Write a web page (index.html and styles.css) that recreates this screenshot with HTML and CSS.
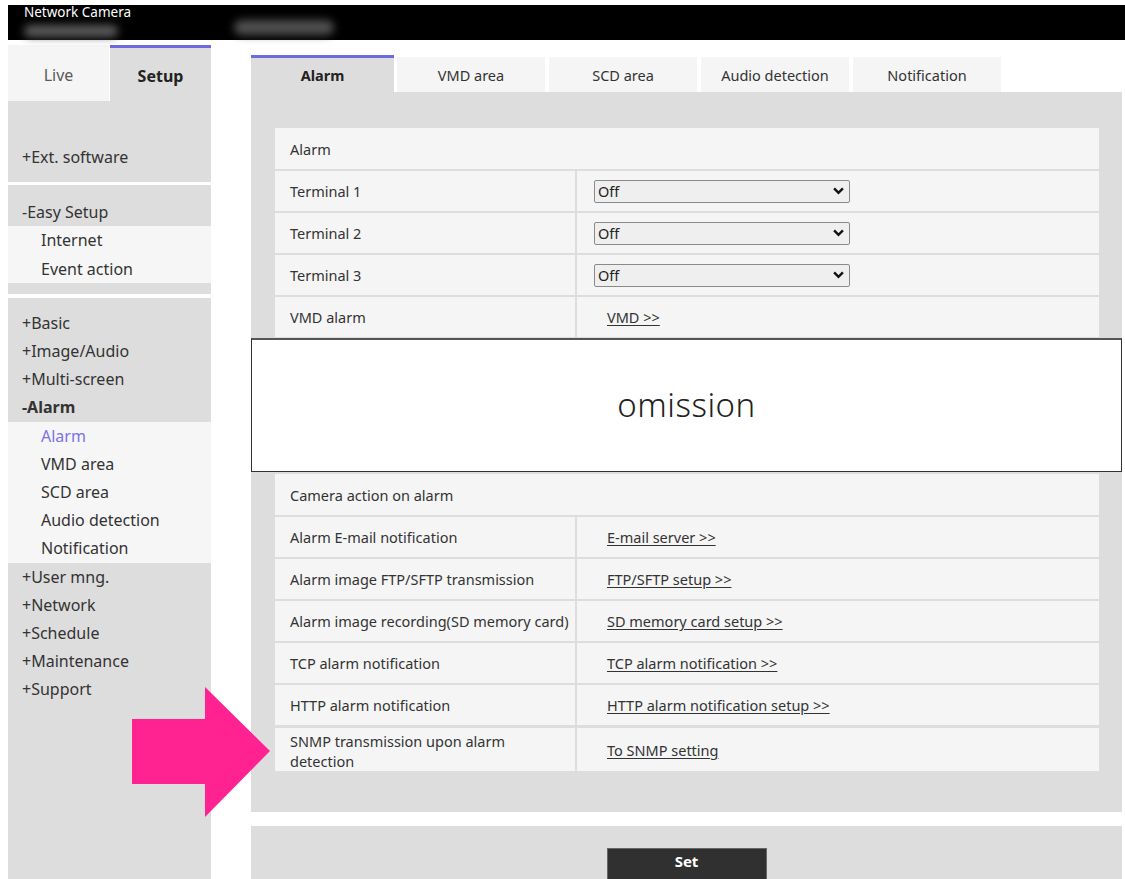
FILE: index.html
```html
<!DOCTYPE html>
<html lang="en">
<head>
<meta charset="utf-8">
<title>Network Camera - Setup - Alarm</title>
<link rel="stylesheet" href="styles.css">
</head>
<body>
<div class="page">
  <header class="topbar">
    <span class="brand-name">Network Camera</span>
    <span class="smudge smudge-model"></span>
    <span class="smudge smudge-title"></span>
  </header>

  <div class="layout">
    <aside class="sidebar">
      <div class="mode-tabs">
        <div class="mode-tab">Live</div>
        <div class="mode-tab active">Setup</div>
      </div>

      <div class="menu-group group-ext">
        <div class="menu-item">+Ext. software</div>
      </div>

      <div class="menu-group group-easy">
        <div class="menu-item">-Easy Setup</div>
        <div class="submenu">
          <div class="menu-item sub">Internet</div>
          <div class="menu-item sub">Event action</div>
        </div>
      </div>

      <div class="menu-group group-main">
        <div class="menu-item">+Basic</div>
        <div class="menu-item">+Image/Audio</div>
        <div class="menu-item">+Multi-screen</div>
        <div class="menu-item open">-Alarm</div>
        <div class="submenu">
          <div class="menu-item sub current">Alarm</div>
          <div class="menu-item sub">VMD area</div>
          <div class="menu-item sub">SCD area</div>
          <div class="menu-item sub">Audio detection</div>
          <div class="menu-item sub">Notification</div>
        </div>
        <div class="menu-item">+User mng.</div>
        <div class="menu-item">+Network</div>
        <div class="menu-item">+Schedule</div>
        <div class="menu-item">+Maintenance</div>
        <div class="menu-item">+Support</div>
      </div>
    </aside>

    <main class="main">
      <nav class="tabs">
        <div class="tab active">Alarm</div>
        <div class="tab">VMD area</div>
        <div class="tab">SCD area</div>
        <div class="tab">Audio detection</div>
        <div class="tab">Notification</div>
      </nav>

      <section class="panel">
        <div class="settings">
          <div class="row heading">Alarm</div>
          <div class="row">
            <div class="label">Terminal 1</div>
            <div class="value">
              <div class="select"><span>Off</span>
                <svg class="chevron" viewBox="0 0 10 7" width="11" height="8"><path d="M1 1.2 L5 5.2 L9 1.2" fill="none" stroke="#111" stroke-width="2.2"/></svg>
              </div>
            </div>
          </div>
          <div class="row">
            <div class="label">Terminal 2</div>
            <div class="value">
              <div class="select"><span>Off</span>
                <svg class="chevron" viewBox="0 0 10 7" width="11" height="8"><path d="M1 1.2 L5 5.2 L9 1.2" fill="none" stroke="#111" stroke-width="2.2"/></svg>
              </div>
            </div>
          </div>
          <div class="row">
            <div class="label">Terminal 3</div>
            <div class="value">
              <div class="select"><span>Off</span>
                <svg class="chevron" viewBox="0 0 10 7" width="11" height="8"><path d="M1 1.2 L5 5.2 L9 1.2" fill="none" stroke="#111" stroke-width="2.2"/></svg>
              </div>
            </div>
          </div>
          <div class="row">
            <div class="label">VMD alarm</div>
            <div class="value"><a class="link" href="#">VMD &gt;&gt;</a></div>
          </div>
        </div>

        <div class="omission">omission</div>

        <div class="settings">
          <div class="row heading">Camera action on alarm</div>
          <div class="row">
            <div class="label">Alarm E-mail notification</div>
            <div class="value"><a class="link" href="#">E-mail server &gt;&gt;</a></div>
          </div>
          <div class="row">
            <div class="label">Alarm image FTP/SFTP transmission</div>
            <div class="value"><a class="link" href="#">FTP/SFTP setup &gt;&gt;</a></div>
          </div>
          <div class="row">
            <div class="label">Alarm image recording(SD memory card)</div>
            <div class="value"><a class="link" href="#">SD memory card setup &gt;&gt;</a></div>
          </div>
          <div class="row">
            <div class="label">TCP alarm notification</div>
            <div class="value"><a class="link" href="#">TCP alarm notification &gt;&gt;</a></div>
          </div>
          <div class="row">
            <div class="label">HTTP alarm notification</div>
            <div class="value"><a class="link" href="#">HTTP alarm notification setup &gt;&gt;</a></div>
          </div>
          <div class="row tall">
            <div class="label two-line">SNMP transmission upon alarm<br>detection</div>
            <div class="value"><a class="link" href="#">To SNMP setting</a></div>
          </div>
        </div>
      </section>

      <div class="actions">
        <button class="set-btn" type="button">Set</button>
      </div>
    </main>
  </div>

  <svg class="pointer-arrow" viewBox="0 0 139 131" width="139" height="131">
    <polygon points="0,32 73,32 73,0 138,64 73,130 73,97 0,97" fill="#ff2290"/>
  </svg>
</div>
</body>
</html>
```

FILE: styles.css
```css
html, body {
  margin: 0;
  padding: 0;
  background: #ffffff;
}

body {
  font-family: "Noto Sans", "Open Sans", sans-serif;
  color: #333333;
}

.page {
  position: relative;
  width: 1125px;
  height: 879px;
  overflow: hidden;
  padding-left: 8px;
  box-sizing: border-box;
}

/* ---------- top bar ---------- */
.topbar {
  position: relative;
  margin-top: 5px;
  height: 35px;
  background: #000000;
}

.brand-name {
  position: absolute;
  left: 16px;
  top: -1px;
  font-size: 13.5px;
  line-height: 16px;
  color: #ffffff;
}

.smudge {
  position: absolute;
  background: #6c6c6c;
  border-radius: 8px;
  filter: blur(4px);
}

.smudge-model {
  left: 16px;
  top: 20px;
  width: 94px;
  height: 12px;
  background: #5c5c5c;
}

.smudge-title {
  left: 226px;
  top: 15px;
  width: 100px;
  height: 15px;
  background: #505050;
}

/* ---------- layout ---------- */
.layout {
  display: flex;
  margin-top: 5px;
  height: 834px;
}

/* ---------- sidebar ---------- */
.sidebar {
  width: 203px;
  flex: none;
  display: flex;
  flex-direction: column;
}

.mode-tabs {
  display: flex;
  height: 56px;
}

.mode-tab {
  flex: 1;
  display: flex;
  align-items: center;
  justify-content: center;
  font-size: 16px;
  color: #5a5a5a;
  background: #f5f5f5;
  padding-top: 3px;
}

.mode-tab.active {
  margin-left: 1px;
  background: #dddddd;
  border-top: 3px solid #6b6bde;
  font-weight: 700;
  color: #222222;
  padding-top: 2px;
}

.menu-group {
  background: #dddddd;
}

.group-ext {
  padding: 42px 0 11px;
}

.group-easy {
  margin-top: 3px;
  padding: 13px 0 11px;
}

.group-main {
  margin-top: 4px;
  padding-top: 11px;
  flex: 1;
}

.menu-item {
  font-size: 16px;
  line-height: 28.2px;
  padding-left: 14px;
  color: #333333;
  white-space: nowrap;
}

.menu-item.open {
  font-weight: 700;
}

.submenu {
  background: #f6f6f6;
}

.menu-item.sub {
  padding-left: 33px;
}

.menu-item.current {
  color: #7b72ea;
}

/* ---------- main column ---------- */
.main {
  margin-left: 40px;
  width: 871px;
  flex: none;
  padding-top: 10px;
}

.tabs {
  display: flex;
  align-items: flex-end;
  height: 37px;
}

.tab {
  width: 148px;
  height: 35px;
  margin-left: 4px;
  display: flex;
  align-items: center;
  justify-content: center;
  font-size: 14.5px;
  color: #333333;
  background: #f5f5f5;
  box-sizing: border-box;
}

.tab.active {
  width: 143px;
  height: 37px;
  margin-left: 0;
  margin-right: -1px;
  background: #dddddd;
  border-top: 3px solid #6b6bde;
  font-weight: 700;
  color: #222222;
}

.panel {
  background: #dddddd;
  padding: 36px 23px 41px 24px;
}

.settings {
  display: flex;
  flex-direction: column;
  gap: 2px;
}

.row {
  display: flex;
  height: 40px;
  background: #f5f5f5;
  font-size: 14.5px;
}

.row.tall {
  height: 43px;
  margin-top: 1px;
}

.row.heading {
  height: 41px;
  align-items: center;
  padding-left: 15px;
}

.label {
  width: 300px;
  flex: none;
  box-sizing: border-box;
  padding-left: 15px;
  display: flex;
  align-items: center;
  white-space: nowrap;
}

.label.two-line {
  line-height: 20px;
  padding-top: 2px;
}

.value {
  flex: 1;
  border-left: 2px solid #dddddd;
  padding-left: 17px;
  display: flex;
  align-items: center;
}

.select {
  width: 256px;
  height: 23px;
  box-sizing: border-box;
  border: 1px solid #8a8a8a;
  border-radius: 2px;
  background: #efefef;
  display: flex;
  align-items: center;
  justify-content: space-between;
  padding: 0 5px 0 3px;
  font-size: 14.5px;
  color: #222222;
}

.chevron {
  display: block;
}

.link {
  margin-left: 13px;
  color: #333333;
  text-decoration: underline;
  text-underline-offset: 2px;
  white-space: nowrap;
}

.omission {
  margin: 1px -23px 2px -24px;
  height: 134px;
  box-sizing: border-box;
  background: #ffffff;
  border: 1px solid #333333;
  border-top: 2px solid #555555;
  display: flex;
  align-items: center;
  justify-content: center;
  font-size: 33px;
  font-weight: 300;
  letter-spacing: 0.5px;
  color: #222222;
  padding-bottom: 3px;
}

/* ---------- footer actions ---------- */
.actions {
  margin-top: 14px;
  height: 60px;
  background: #dddddd;
  padding-top: 22px;
  display: flex;
  justify-content: center;
  align-items: flex-start;
  box-sizing: border-box;
}

.set-btn {
  width: 160px;
  height: 33px;
  background: #303030;
  border: 1px solid #666666;
  color: #ffffff;
  font-family: "Noto Sans", sans-serif;
  font-size: 15px;
  font-weight: 700;
  padding: 0 0 7px;
}

/* ---------- pointer callout ---------- */
.pointer-arrow {
  position: absolute;
  left: 132px;
  top: 687px;
}
```
